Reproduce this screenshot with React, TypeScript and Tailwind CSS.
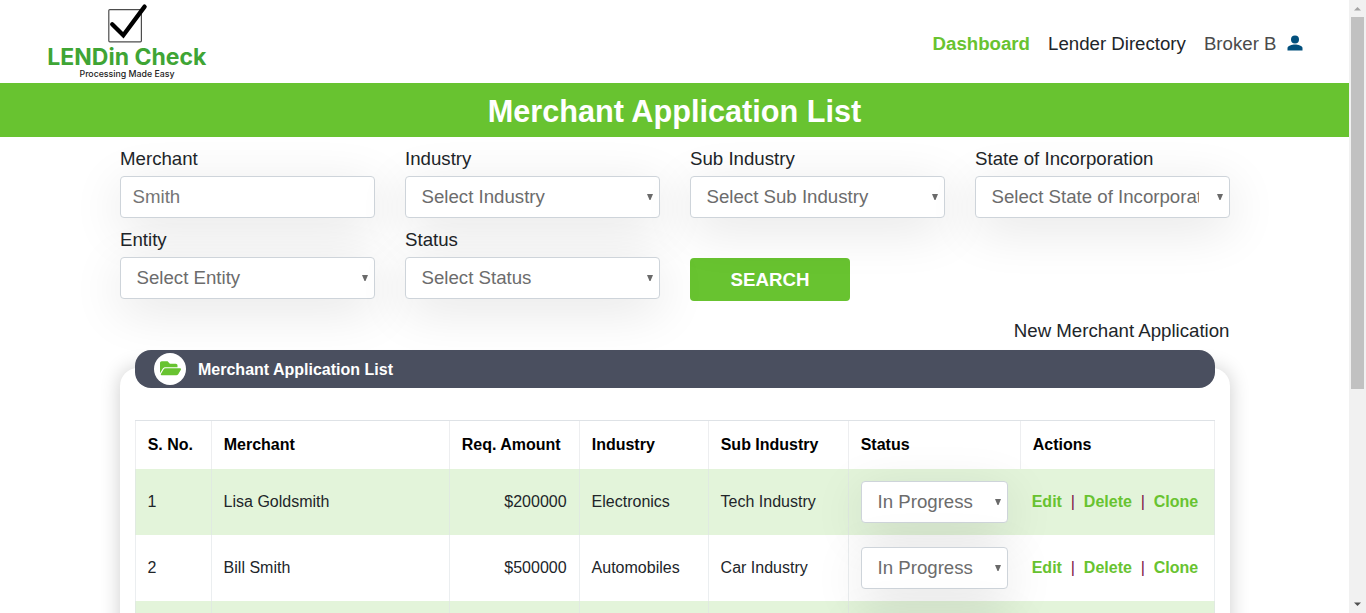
import React from "react";

const shadow = "shadow-[0_11px_52px_rgba(0,0,0,0.11)]";

function Logo() {
  return (
    <svg width="170" height="83" viewBox="0 0 170 83" className="block">
      <rect x="68.8" y="9.6" width="32.6" height="32.2" rx="1" fill="#fff" stroke="#4d4d4d" strokeWidth="1.2" />
      <path d="M72.2 24.2 L83.3 35.2 L104.6 6.6" fill="none" stroke="#000" strokeWidth="4.3" strokeLinecap="round" />
      <text x="7.3" y="65" textLength="159" lengthAdjust="spacingAndGlyphs" fontSize="22.5" fontWeight="700" fill="#3fa535" fontFamily="Inter, sans-serif">
        LENDin Check
      </text>
      <text x="39.5" y="76.5" textLength="95" lengthAdjust="spacingAndGlyphs" fontSize="9" fontWeight="500" fill="#222" fontFamily="Inter, sans-serif">
        Processing Made Easy
      </text>
    </svg>
  );
}

function Select({ text }: { text: string }) {
  return (
    <div className="relative h-[42px] w-full">
      <select
        className={`block h-[42px] w-full appearance-none rounded border border-[#ced4da] bg-white pl-[15.500px] pr-[30px] text-[18.667px] text-[#6c6c6c] ${shadow}`}
      >
        <option>{text}</option>
      </select>
      <svg width="6" height="6" viewBox="0 0 6 6" className="absolute right-[7px] top-[18px]">
        <path d="M0 0H6L3.500 6H2.500Z" fill="#6a6a6a" />
      </svg>
    </div>
  );
}

function Field({ label, children }: { label: string; children: React.ReactNode }) {
  return (
    <div className="h-[81px]">
      <div className="flex h-[39px] items-center pt-[4px] text-[18.667px] text-[#212529]">{label}</div>
      {children}
    </div>
  );
}

const columns = ["S. No.", "Merchant", "Req. Amount", "Industry", "Sub Industry", "Status", "Actions"];
const rows = [
  ["1", "Lisa Goldsmith", "$200000", "Electronics", "Tech Industry", "In Progress"],
  ["2", "Bill Smith", "$500000", "Automobiles", "Car Industry", "In Progress"],
  ["", "", "", "", "", ""],
];
const grid = "grid grid-cols-[76px_238px_130px_129px_140px_172px_194px]";

export default function App() {
  return (
    <div className="flex h-[613px] w-[1366px] overflow-hidden bg-white font-['Liberation_Sans',Arial,sans-serif] text-[#212529]">
      <main className="h-full w-[1349px] overflow-hidden">
        <header className="flex h-[83px] justify-between pl-10 pr-[46.500px]">
          <Logo />
          <nav className="flex h-[88px] items-center text-[18.667px]">
            <a className="mr-[18px] font-bold text-[#68c330]">Dashboard</a>
            <a className="mr-[18px]">Lender Directory</a>
            <a className="mr-[10px] text-[#4b4b4b]">Broker B</a>
            <svg width="16" height="16" viewBox="0 0 16 16" className="mb-[3px]">
              <circle cx="8" cy="4.4" r="4" fill="#02507d" />
              <path d="M0.5 15.5V13C0.5 10.7 5 9.5 8 9.5S15.5 10.7 15.5 13V15.5Z" fill="#02507d" />
            </svg>
          </nav>
        </header>
        <h1 className="relative flex h-[54px] items-center justify-center bg-[#68c330] pt-[2px] text-[30.667px] font-bold text-white">
          Merchant Application List
        </h1>
        <section className="ml-[120px] grid h-[178px] w-[1110px] grid-cols-[255px_255px_255px_255px] content-start gap-x-[30px]">
          <Field label="Merchant">
            <input
              className={`block h-[42px] w-full rounded border border-[#ced4da] bg-white pl-[11.500px] pr-3 text-[18.667px] placeholder:text-[#757575] ${shadow}`}
              placeholder="Smith"
            />
          </Field>
          <Field label="Industry"><Select text="Select Industry" /></Field>
          <Field label="Sub Industry"><Select text="Select Sub Industry" /></Field>
          <Field label="State of Incorporation"><Select text="Select State of Incorporation" /></Field>
          <Field label="Entity"><Select text="Select Entity" /></Field>
          <Field label="Status"><Select text="Select Status" /></Field>
          <button className="mt-10 h-[43px] w-[160px] rounded bg-[#68c330] text-[18.667px] font-bold text-white">SEARCH</button>
        </section>
        <div className="ml-[120px] flex h-[35px] w-[1110px] items-center justify-end pb-[4px] pr-[0.500px] text-[18.667px]">
          New Merchant Application
        </div>
        <section className="ml-[120px] mt-[18px] h-[400px] w-[1110px] rounded-[18px] bg-white px-[15px] shadow-[0_0_20px_rgba(0,0,0,0.2)]">
          <div className="relative -top-[18px] flex h-[38px] items-center rounded-[16px] bg-[#4a4f5f] pl-[19px] text-base font-bold text-white">
            <span className="mr-3 flex size-8 items-center justify-center rounded-full bg-white">
              <svg width="21" height="18.7" viewBox="0 0 576 512" className="mb-[2px]">
                <path
                  fill="#68c330"
                  d="M572.7 292.1L500.3 416.2A64 64 0 0 1 445 448H45c-18.500 0-30.100-20.100-20.700-36.100l72.400-124.200A64 64 0 0 1 152 256h400c18.500 0 30 20.100 20.700 36.100zM152 224h328v-48c0-26.500-21.500-48-48-48H272l-64-64H48C21.500 64 0 85.500 0 112v278.000l69.100-118.400C86.200 242.200 118 224 152 224z"
                />
              </svg>
            </span>
            <span className="pt-[1px]">Merchant Application List</span>
          </div>
          <div className="mt-[14px] w-[1080px] border-t border-[#dee2e6]">
            <div className={`${grid} h-12 border-l border-[#edeef0] text-base font-bold text-black`}>
              {columns.map((c) => (
                <div key={c} className="flex items-center border-r border-[#edeef0] pl-[11.700px]">{c}</div>
              ))}
            </div>
            {rows.map((row, i) => (
              <div key={i} className={`${grid} h-[66px] border-l border-[#dee2e6]/60 text-base ${i % 2 ? "bg-white" : "bg-[#e3f4da]"}`}>
                {row.slice(0, 5).map((v, j) => (
                  <div key={j} className={`flex items-center border-r border-[#dee2e6]/60 pl-[11.600px] pr-[12.400px] ${j === 2 ? "justify-end" : ""}`}>{v}</div>
                ))}
                <div className="flex items-center pl-3 pr-[13px]"><Select text={row[5]} /></div>
                <div className="flex items-center border-r border-[#dee2e6]/60 pl-[10.700px]">
                  {row[0] && (
                    <>
                      <b className="text-[#68c330]">Edit</b>
                      <span className="mx-[8.900px] text-[#7d1145]">|</span>
                      <b className="text-[#68c330]">Delete</b>
                      <span className="mx-[8.900px] text-[#7d1145]">|</span>
                      <b className="text-[#68c330]">Clone</b>
                    </>
                  )}
                </div>
              </div>
            ))}
          </div>
        </section>
      </main>
      <aside className="relative flex h-full w-[17px] flex-col items-center bg-[#f1f1f1]">
        <svg width="17" height="17" viewBox="0 0 17 17" className="shrink-0"><path d="M5 10.500L8.500 7L12 10.500Z" fill="#a3a3a3" /></svg>
        <div className="h-[372px] w-[13px] bg-[#c1c1c1]" />
        <svg width="17" height="17" viewBox="0 0 17 17" className="mt-auto shrink-0"><path d="M5 6.500L8.500 10L12 6.500Z" fill="#505050" /></svg>
      </aside>
    </div>
  );
}
